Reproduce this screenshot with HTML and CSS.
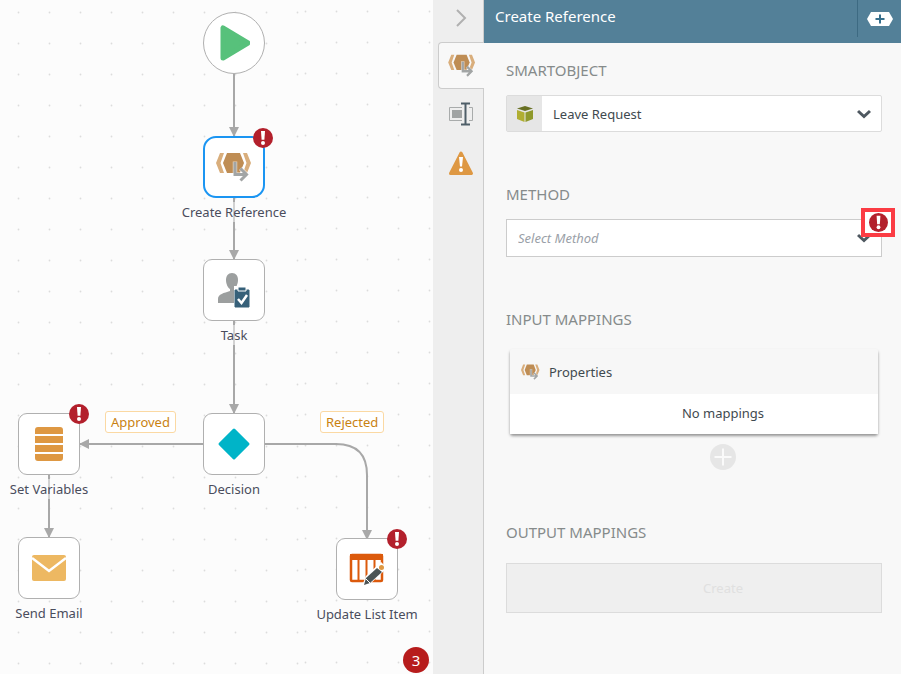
FILE: index.html
```html
<!DOCTYPE html>
<html lang="en">
  <head>
    <meta charset="UTF-8" />
    <meta name="viewport" content="width=device-width, initial-scale=1.0" />
    <title>Workflow Designer</title>
    <link rel="stylesheet" href="styles.css" />
  </head>
  <body>
    <!-- Shared icons -->
    <svg class="sprite" aria-hidden="true">
      <symbol id="icon-alert" viewBox="0 0 20 20">
        <circle cx="10" cy="10" r="10" fill="#b3202c" />
        <path d="M8 3h4l-.6 8.8H8.600z" fill="#fff" />
        <circle cx="10" cy="15" r="2" fill="#fff" />
      </symbol>
      <symbol id="icon-reference" viewBox="0 0 36 30">
        <path d="M4 1h4L4.500 11 8 21H4L0 11z" fill="#d9ae7c" />
        <path d="M31 1h-4l3.500 10L27 21h4l4-10z" fill="#d9ae7c" />
        <path d="M11 1h13l4 10-4 10H11L7 11z" fill="#bf8d54" />
        <path d="M19 9.500V22.500h10M24.500 16.500l6 6-6 6" fill="none" stroke="#fff" stroke-opacity="0.600" stroke-width="4.500" />
        <path d="M19 10v12.500h10M24.500 16.500l6 6-6 6" fill="none" stroke="#a2a5a5" stroke-width="3" />
      </symbol>
      <symbol id="icon-chevron" viewBox="0 0 14 10">
        <path d="M1 2l6 5.500 6-5.500" fill="none" stroke="#4e5860" stroke-width="3" />
      </symbol>
    </svg>

    <div class="designer">
      <!-- Workflow canvas -->
      <main class="canvas">
        <svg class="connectors" aria-hidden="true">
          <defs>
            <pattern id="dots" width="31" height="31" x="3" y="-3" patternUnits="userSpaceOnUse">
              <circle cx="15.500" cy="15.500" r="0.900" fill="#dcdcdc" />
            </pattern>
            <pattern id="dotsRight" width="31" height="31" x="-20" y="-4" patternUnits="userSpaceOnUse">
              <circle cx="15.500" cy="15.500" r="0.900" fill="#dcdcdc" />
            </pattern>
            <marker id="arrow" markerUnits="userSpaceOnUse" markerWidth="10" markerHeight="10" refX="9" refY="5" orient="auto">
              <path d="M0 0l10 5-10 5z" fill="#a8a8a8" />
            </marker>
          </defs>
          <rect width="300" height="100%" fill="url(#dots)" />
          <rect x="300" width="100%" height="100%" fill="url(#dotsRight)" />
          <g fill="none" stroke="#a8a8a8" stroke-width="2">
            <path d="M234 74v62" marker-end="url(#arrow)" />
            <path d="M234 198v61" marker-end="url(#arrow)" />
            <path d="M234 321v92" marker-end="url(#arrow)" />
            <path d="M203 444H80" marker-end="url(#arrow)" />
            <path d="M49 475v62" marker-end="url(#arrow)" />
            <path d="M265 444h71q31 0 31 31v64" marker-end="url(#arrow)" />
          </g>
        </svg>

        <button class="node node-start" aria-label="Start">
          <span class="node-box">
            <svg width="32" height="36" viewBox="0 0 32 36">
              <path d="M5 3v30l25-15z" fill="#57c17b" stroke="#57c17b" stroke-width="5" stroke-linejoin="round" />
            </svg>
          </span>
        </button>

        <button class="node node-reference selected">
          <span class="node-box">
            <svg width="36" height="30"><use href="#icon-reference" /></svg>
            <svg class="node-alert"><use href="#icon-alert" /></svg>
          </span>
          <span class="node-label">Create Reference</span>
        </button>

        <button class="node node-task">
          <span class="node-box">
            <svg width="34" height="36" viewBox="0 0 34 36">
              <path d="M15 1c4 0 6 3 6 7s-2 8-4 9v3l6 2v9H1v-4c0-5 6-6 12-8v-2c-2-1-4-5-4-9s2-7 6-7z" fill="#9c9f9f" />
              <path d="M17 14h17v22H17z" fill="#fff" />
              <path d="M18 18h14v17H18z" fill="#366079" stroke="#366079" stroke-linejoin="round" />
              <path d="M21 15h8v4h-8z" fill="#366079" stroke="#fff" />
              <path d="M21 27l3.500 4L30 23" fill="none" stroke="#fff" stroke-width="2.500" />
            </svg>
          </span>
          <span class="node-label">Task</span>
        </button>

        <button class="node node-decision">
          <span class="node-box">
            <svg width="34" height="34" viewBox="0 0 34 34">
              <path d="M17 3l14 14-14 14L3 17z" fill="#00b4c8" stroke="#00b4c8" stroke-width="3" stroke-linejoin="round" />
            </svg>
          </span>
          <span class="node-label">Decision</span>
        </button>

        <button class="node node-variables">
          <span class="node-box">
            <svg width="28" height="34" viewBox="0 0 28 34">
              <path d="M3 0h22q3 0 3 3v4H0V3q0-3 3-3zM0 9h28v7H0zM0 18h28v7H0zM0 27h28v4q0 3-3 3H3q-3 0-3-3z" fill="#de9843" />
            </svg>
            <svg class="node-alert"><use href="#icon-alert" /></svg>
          </span>
          <span class="node-label">Set Variables</span>
        </button>

        <button class="node node-email">
          <span class="node-box">
            <svg width="34" height="26" viewBox="0 0 34 26">
              <rect width="34" height="26" rx="2" fill="#edb862" />
              <path d="M0 3l17 13L34 3" fill="none" stroke="#fff" stroke-width="2.500" />
            </svg>
          </span>
          <span class="node-label">Send Email</span>
        </button>

        <button class="node node-update">
          <span class="node-box">
            <svg width="36" height="34" viewBox="0 0 36 34">
              <rect x="2" y="3" width="31" height="26" rx="1" fill="#fff" stroke="#dc5a0c" stroke-width="2.500" />
              <path d="M1 2h33v6H1z" fill="#dc5a0c" />
              <path d="M9.500 8v20M17.500 8v20M25.500 8v20" stroke="#dc5a0c" stroke-width="2" />
              <path d="M15 33l3-8 14-13 4 4-14 13z" fill="#fff" stroke="#fff" stroke-width="3" />
              <path d="M15 33l2-7 11-10 5 4-12 11z" fill="#4b5455" />
              <path d="M17 27l4 4" stroke="#fff" />
              <circle cx="32.500" cy="15.500" r="2.500" fill="#de9843" />
            </svg>
            <svg class="node-alert"><use href="#icon-alert" /></svg>
          </span>
          <span class="node-label">Update List Item</span>
        </button>

        <span class="branch branch-approved">Approved</span>
        <span class="branch branch-rejected">Rejected</span>

        <button class="error-count" aria-label="3 errors">3</button>
      </main>

      <!-- Configuration panel tabs -->
      <nav class="tabs">
        <button class="tab-collapse" aria-label="Collapse panel">
          <svg width="12" height="18" viewBox="0 0 12 18">
            <path d="M2 1l8 8-8 8" fill="none" stroke="#b0b0b0" stroke-width="2" />
          </svg>
        </button>
        <button class="tab active" aria-label="Create Reference">
          <svg width="28" height="23"><use href="#icon-reference" /></svg>
        </button>
        <button class="tab" aria-label="Rename">
          <svg width="24" height="24" viewBox="0 0 24 24">
            <path d="M13 5.500H.500v13H13M20 5.500h3.500v13H20" fill="none" stroke="#a8abab" />
            <path d="M3 8h10v8H3z" fill="#a0a3a3" />
            <path d="M12 1.500h9M12 22.500h9M16.500 1v22" fill="none" stroke="#4e5e68" stroke-width="2" />
          </svg>
        </button>
        <button class="tab" aria-label="Errors">
          <svg width="26" height="26" viewBox="0 0 26 26">
            <path d="M13 3l10.500 20.500h-21z" fill="#de9843" stroke="#de9843" stroke-width="3" stroke-linejoin="round" />
            <path d="M11 7h4l-1 9.500h-2z" fill="#fff" />
            <circle cx="13" cy="20" r="2" fill="#fff" />
          </svg>
        </button>
      </nav>

      <!-- Configuration panel -->
      <aside class="panel">
        <header class="panel-header">
          <h1>Create Reference</h1>
          <button class="panel-add" aria-label="Add">
            <svg width="26" height="14" viewBox="0 0 26 14">
              <path d="M4 0h18l4 7-4 7H4L0 7z" fill="#fff" />
              <path d="M13 2.500v9M8.500 7h9" stroke="#366f8c" stroke-width="2" />
            </svg>
          </button>
        </header>

        <form class="panel-body">
          <section>
            <h2><label for="smartobject">SMARTOBJECT</label></h2>
            <div class="field">
              <span class="field-icon">
                <svg width="16" height="16" viewBox="0 0 16 16">
                  <path d="M0 2.500L8 0l8 2.500L8 5z" fill="#687023" />
                  <path d="M0 4l7.500 2.500V16L0 13z" fill="#b0ae31" />
                  <path d="M16 4L8.500 6.500V16l7.500-3z" fill="#8f992b" />
                </svg>
              </span>
              <select id="smartobject">
                <option>Leave Request</option>
              </select>
              <svg class="field-arrow"><use href="#icon-chevron" /></svg>
            </div>
          </section>

          <section>
            <h2><label for="method">METHOD</label></h2>
            <div class="field field-empty">
              <select id="method">
                <option>Select Method</option>
              </select>
              <svg class="field-arrow"><use href="#icon-chevron" /></svg>
              <span class="field-error">
                <svg width="19" height="19"><use href="#icon-alert" /></svg>
              </span>
            </div>
          </section>

          <section>
            <h2>INPUT MAPPINGS</h2>
            <div class="mapping-card">
              <div class="mapping-title">
                <svg width="19" height="16"><use href="#icon-reference" /></svg>
                <span>Properties</span>
              </div>
              <p class="mapping-empty">No mappings</p>
            </div>
            <div class="mapping-actions">
              <button type="button" aria-label="Add mapping">
                <svg width="26" height="26" viewBox="0 0 26 26">
                  <circle cx="13" cy="13" r="13" fill="#e6e6e6" />
                  <path d="M13 4.500v17M4.500 13h17" stroke="#fafafa" stroke-width="2" />
                </svg>
              </button>
            </div>
          </section>

          <section>
            <h2>OUTPUT MAPPINGS</h2>
            <button type="button" class="create-button" disabled>Create</button>
          </section>
        </form>
      </aside>
    </div>
  </body>
</html>
```
FILE: styles.css
```css
* {
  box-sizing: border-box;
}

body {
  margin: 0;
  font-family: "Noto Sans", "Open Sans", sans-serif;
  font-size: 13px;
  line-height: 20px;
  color: #3f4a4f;
}

button,
select {
  font: inherit;
  color: inherit;
  border: none;
  background: none;
  padding: 0;
  margin: 0;
}

svg {
  display: block;
}

.sprite {
  position: absolute;
  width: 0;
  height: 0;
}

.designer {
  display: grid;
  grid-template-columns: minmax(0, 1fr) 51px 417px;
  min-height: 100vh;
}

/* Workflow canvas */
.canvas {
  position: relative;
  overflow: hidden;
  background: #fcfcfc;
}

.connectors {
  position: absolute;
  width: 100%;
  height: 100%;
}

.node {
  position: absolute;
  width: 124px;
  display: flex;
  flex-direction: column;
  align-items: center;
  gap: 4px;
  color: #4a4d5c;
}

.node-box {
  position: relative;
  width: 62px;
  height: 62px;
  display: flex;
  align-items: center;
  justify-content: center;
  background: #fff;
  border: 1px solid #b0b0b0;
  border-radius: 9px;
}

.node-label {
  background: rgba(252, 252, 252, 0.5);
}

.node-start .node-box {
  border-radius: 50%;
}

.node.selected .node-box {
  border: 2px solid #1b95f2;
  border-radius: 13px;
}

.node-alert {
  position: absolute;
  top: -10px;
  right: -10px;
  width: 20px;
  height: 20px;
}

.node-start {
  left: 172px;
  top: 12px;
}

.node-reference {
  left: 172px;
  top: 136px;
}

.node-task {
  left: 172px;
  top: 259px;
}

.node-decision {
  left: 172px;
  top: 413px;
}

.node-variables {
  left: -13px;
  top: 413px;
}

.node-email {
  left: -13px;
  top: 537px;
}

.node-update {
  left: 305px;
  top: 538px;
}

.branch {
  position: absolute;
  top: 411px;
  padding: 0 5px;
  color: #c98212;
  background: #fff;
  border: 1px solid #fbd9a3;
  border-radius: 3px;
}

.branch-approved {
  left: 105px;
}

.branch-rejected {
  left: 320px;
}

.error-count {
  position: absolute;
  right: 4px;
  bottom: 1px;
  width: 26px;
  height: 26px;
  border-radius: 50%;
  background: #b71c1c;
  color: #fff;
  font-size: 15px;
}

/* Tab strip */
.tabs {
  display: flex;
  flex-direction: column;
  background: #eee;
  border-right: 1px solid #ccc;
}

.tab-collapse,
.tab {
  display: flex;
  align-items: center;
  justify-content: center;
  margin-left: 5px;
}

.tab-collapse {
  height: 42px;
  padding-bottom: 6px;
}

.tab {
  height: 49px;
}

.tab.active {
  height: 47px;
  margin-right: -1px;
  background: #f8f8f8;
  border: 1px solid #ccc;
  border-right: none;
  border-radius: 4px 0 0 4px;
}

/* Configuration panel */
.panel {
  background: #f8f8f8;
}

.panel-header {
  display: flex;
  align-items: flex-start;
  justify-content: space-between;
  height: 43px;
  padding-left: 11px;
  background: #538098;
  color: #fff;
}

.panel-header h1 {
  margin: 6px 0 0;
  font-size: 15px;
  font-weight: normal;
}

.panel-add {
  display: flex;
  align-items: center;
  justify-content: center;
  width: 44px;
  height: 37px;
  border-left: 1px solid #3d6a82;
}

.panel-body {
  padding: 17px 19px 20px 22px;
}

section {
  margin-bottom: 52px;
}

section:last-child {
  margin-bottom: 0;
}

h2 {
  margin: 0 0 15px;
  font-size: 15px;
  font-weight: normal;
  color: #868b8b;
}

.field {
  position: relative;
  display: flex;
  height: 37px;
  background: #fff;
  border: 1px solid #dcdcdc;
  border-radius: 2px;
}

.field-icon {
  display: flex;
  align-items: center;
  justify-content: center;
  width: 35px;
  background: #e6e6e6;
}

.field select {
  flex: 1;
  padding: 0 36px 0 11px;
  appearance: none;
}

.field-arrow {
  position: absolute;
  top: 13px;
  right: 10px;
  width: 14px;
  height: 10px;
  pointer-events: none;
}

.field-empty {
  height: 38px;
  border-color: #ccc;
  border-radius: 0;
}

.field-empty select {
  color: #9a9fa8;
  font-style: italic;
}

.field-error {
  position: absolute;
  top: -12px;
  right: -14px;
  width: 34px;
  height: 29px;
  display: flex;
  align-items: center;
  justify-content: center;
  background: #fff;
  border: 4px solid #fb3c44;
}

.mapping-card {
  margin: 20px 4px 10px;
  border-radius: 3px;
  box-shadow: 0 2px 3px rgba(0, 0, 0, 0.4);
}

.mapping-title {
  display: flex;
  align-items: center;
  gap: 9px;
  height: 45px;
  padding-left: 11px;
  background: #f7f7f7;
  border-radius: 3px 3px 0 0;
}

.mapping-empty {
  margin: 0;
  padding: 9px 0 11px 58px;
  text-align: center;
  background: #fff;
}

.mapping-actions {
  display: flex;
  justify-content: center;
  padding-left: 58px;
}

.create-button {
  width: 100%;
  height: 50px;
  margin-top: 6px;
  padding-left: 58px;
  background: #efefef;
  border: 1px solid #dcdcdc;
  color: #e0e0e0;
}
```
